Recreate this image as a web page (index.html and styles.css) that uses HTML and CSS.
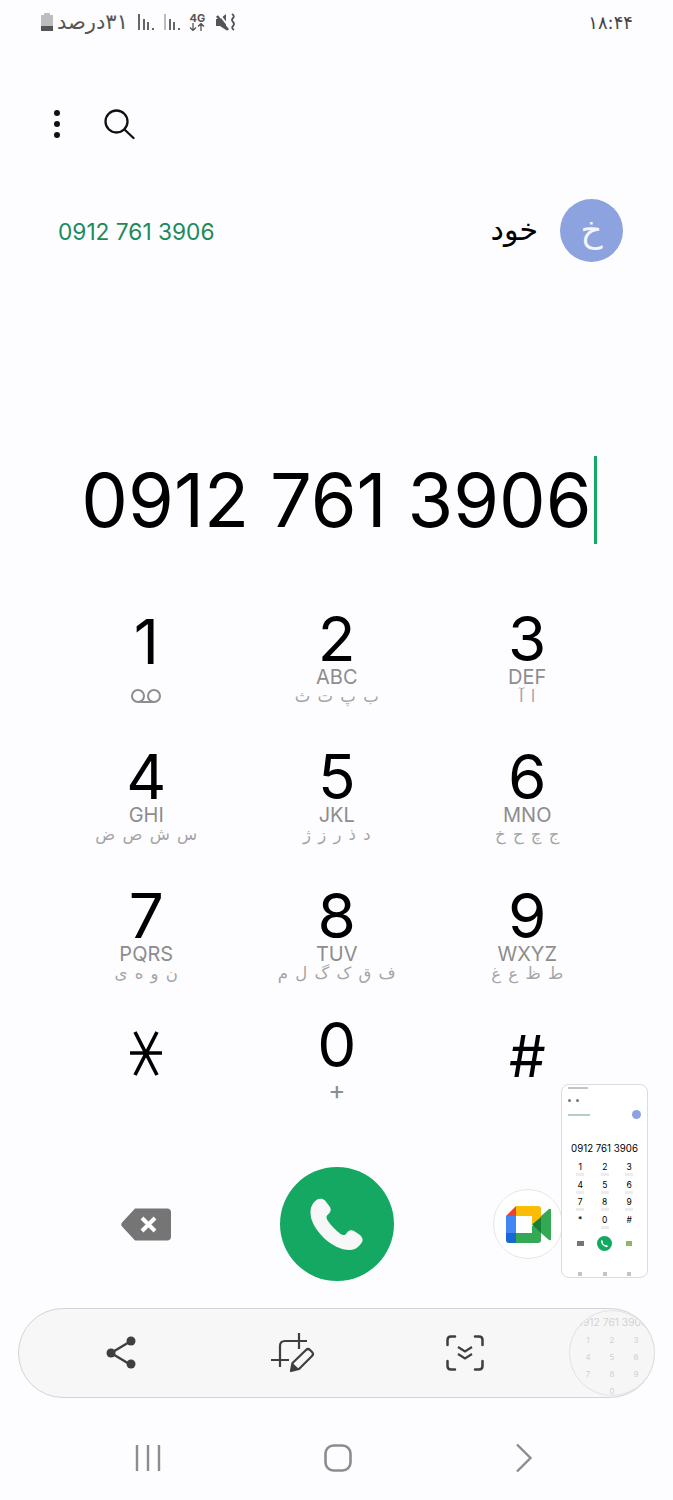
FILE: index.html
```html
<!DOCTYPE html>
<html lang="en">

<head>
    <meta charset="UTF-8">
    <meta name="viewport" content="width=device-width, initial-scale=1.0">
    <title>Dialer</title>
    <link rel="stylesheet" href="styles.css">
</head>

<body>
    <div class="screen">

        <div class="status-bar">
            <div class="status-left">
                <svg class="battery" viewBox="0 0 14 20" width="14" height="20">
                    <path d="M4 1h6v2h3v16H1V3h3z" fill="#bdbdbd"/>
                    <path d="M1 14h12v4.500q0 .5-.5.5h-11q-.5 0-.5-.5z" fill="#555"/>
                </svg>
                <span class="status-text" dir="rtl">۳۱درصد</span>
                <svg class="signal" viewBox="0 0 18 18" width="18" height="18">
                    <path d="M1 1h2v16H1zM6 6h2v11H6zM10 9h2v8h-2z" fill="#666"/>
                    <path d="M15 15h2v2h-2z" fill="#666"/>
                </svg>
                <svg class="signal" viewBox="0 0 18 18" width="18" height="18">
                    <path d="M1 1h2v16H1z" fill="#bbb"/>
                    <path d="M6 6h2v11H6zM10 9h2v8h-2zM15 15h2v2h-2z" fill="#666"/>
                </svg>
                <div class="net">
                    <span>4G</span>
                    <svg viewBox="0 0 16 8" width="16" height="8">
                        <path d="M4 0v7M1 4.500l3 3 3-3M12 8V1M9 3.500l3-3 3 3" fill="none" stroke="#555" stroke-width="1.300"/>
                    </svg>
                </div>
                <svg class="mute" viewBox="0 0 20 18" width="20" height="18">
                    <path d="M0 6h4l6-5v16l-6-4H0z" fill="#555"/>
                    <path d="M12 17L1 3" stroke="#555" stroke-width="2.600"/>
                    <path d="M14 15L3 1" stroke="#fdfdff" stroke-width="2"/>
                    <path d="M16 1q3 2 1 4t0 4 0 4 1 4" fill="none" stroke="#555" stroke-width="1.800"/>
                </svg>
            </div>
            <span class="clock" dir="rtl">۱۸:۴۴</span>
        </div>

        <div class="actions">
            <div class="more-dots"><i></i><i></i><i></i></div>
            <svg viewBox="0 0 32 32" width="32" height="32">
                <circle cx="13.500" cy="13.500" r="11" fill="none" stroke="#111" stroke-width="2.300"/>
                <path d="M21.500 21.500l9 8.500" stroke="#111" stroke-width="2.300" stroke-linecap="round"/>
            </svg>
        </div>

        <div class="match">
            <span class="match-number">0912 761 3906</span>
            <div class="match-name">
                <span class="name">خود</span>
                <div class="avatar">خ</div>
            </div>
        </div>

        <div class="dial-number">0912 761 3906<span class="caret"></span></div>

        <div class="keypad">
            <div class="key">
                <div class="digit one">1</div>
                <svg class="voicemail" viewBox="0 0 32 14" width="32" height="14">
                    <circle cx="8" cy="7" r="6" fill="none" stroke="#8d8d8d" stroke-width="2"/>
                    <circle cx="24" cy="7" r="6" fill="none" stroke="#8d8d8d" stroke-width="2"/>
                    <path d="M8 13h16" stroke="#8d8d8d" stroke-width="2"/>
                </svg>
            </div>
            <div class="key">
                <div class="digit">2</div>
                <div class="latin">ABC</div>
                <div class="persian" dir="rtl">ب پ ت ث</div>
            </div>
            <div class="key">
                <div class="digit">3</div>
                <div class="latin">DEF</div>
                <div class="persian" dir="rtl">ا آ</div>
            </div>
            <div class="key">
                <div class="digit">4</div>
                <div class="latin">GHI</div>
                <div class="persian" dir="rtl">س ش ص ض</div>
            </div>
            <div class="key">
                <div class="digit">5</div>
                <div class="latin">JKL</div>
                <div class="persian" dir="rtl">د ذ ر ز ژ</div>
            </div>
            <div class="key">
                <div class="digit">6</div>
                <div class="latin">MNO</div>
                <div class="persian" dir="rtl">ج چ ح خ</div>
            </div>
            <div class="key">
                <div class="digit">7</div>
                <div class="latin">PQRS</div>
                <div class="persian" dir="rtl">ن و ه ی</div>
            </div>
            <div class="key">
                <div class="digit">8</div>
                <div class="latin">TUV</div>
                <div class="persian" dir="rtl">ف ق ک گ ل م</div>
            </div>
            <div class="key">
                <div class="digit">9</div>
                <div class="latin">WXYZ</div>
                <div class="persian" dir="rtl">ط ظ ع غ</div>
            </div>
            <div class="key">
                <svg class="star" viewBox="0 0 34 46" width="34" height="46">
                    <path d="M1 22h32M6 1l22 43M28 1L6 44" stroke="#000" stroke-width="3.600" fill="none"/>
                </svg>
            </div>
            <div class="key">
                <div class="digit zero">0</div>
                <div class="plus">+</div>
            </div>
            <div class="key">
                <div class="digit hash">#</div>
            </div>
        </div>

        <div class="call-row">
            <div class="call-cell">
                <svg viewBox="0 0 50 33" width="50" height="33">
                    <path d="M14 .5h32q4 0 4 4v24q0 4-4 4H14L1.500 19q-2.500-2.500 0-5z" fill="#757575"/>
                    <path d="M21 10l13 13M34 10L21 23" stroke="#fff" stroke-width="4"/>
                </svg>
            </div>
            <div class="call-cell">
                <div class="call-btn">
                    <svg viewBox="0 0 53 53" width="53" height="53">
                        <path d="M9 1C6 1.500 1 6 .5 13 0 24 7 33 15 41c7 6 15 11 25 11 6 0 11-5 12.500-9 .5-2-.5-4-2.500-6l-6-4c-2-1.500-5-1-6.500 1l-2 2.500c-1.500 1-3.500.5-5.500-1-4-3-9-8-12-12.500-1.500-2-2-4-1-5.500l2.500-2.500c1.500-2 1.500-4 .5-6l-5-6.500C13 .5 11 .5 9 1z" fill="#f7f7f7"/>
                    </svg>
                </div>
            </div>
            <div class="call-cell">
                <div class="meet-btn">
                    <svg viewBox="0 0 45 37" width="45" height="37">
                        <path d="M10 0L0 10h10z" fill="#ea4335"/>
                        <path d="M10 0h22q3 0 3 3v15l-9 0V10H10z" fill="#fbbc04"/>
                        <path d="M0 10h10v17H0z" fill="#4285f4"/>
                        <path d="M0 27h10v10H3q-3 0-3-3z" fill="#1967d2"/>
                        <path d="M10 27h16v-7l9-1v15q0 3-3 3H10z" fill="#34a853"/>
                        <path d="M26 18.500L35 11v16z" fill="#188038"/>
                        <path d="M35 10l8-7q2-1 2 1v29q0 2-2 1l-8-7z" fill="#34a853"/>
                    </svg>
                </div>
            </div>
        </div>

        <div class="toolbar">
            <svg viewBox="0 0 30 34" width="30" height="34">
                <path d="M5 17L25 5M5 17l20 12" stroke="#3f3f3f" stroke-width="2.500"/>
                <circle cx="5" cy="17" r="4.500" fill="#3f3f3f"/>
                <circle cx="25" cy="5" r="4.500" fill="#3f3f3f"/>
                <circle cx="25" cy="28" r="4.500" fill="#3f3f3f"/>
            </svg>
            <svg viewBox="0 0 44 40" width="44" height="40">
                <path d="M9 34V13q0-5 5-5h22M0 27h18M28 0v16" fill="none" stroke="#3f3f3f" stroke-width="2.200"/>
                <path d="M20 38l1.500-8L35 17q2-2 4 0l2 2q2 2 0 4L28 36z" fill="#f7f7f7" stroke="#3f3f3f" stroke-width="2.200" stroke-linejoin="round"/>
                <path d="M21.500 30l6.500 6-8 2z" fill="#3f3f3f"/>
            </svg>
            <svg viewBox="0 0 38 36" width="38" height="36">
                <path d="M1.500 10V5q0-3.500 3.500-3.500h4M29 1.500h4q3.500 0 3.500 3.500v5M1.500 26v5q0 3.500 3.500 3.500h4M29 34.500h4q3.500 0 3.500-3.500v-5" fill="none" stroke="#3f3f3f" stroke-width="2.500" stroke-linecap="round"/>
                <path d="M12 12l7 4.500 7-4.500M12 19l7 4.500 7-4.500" fill="none" stroke="#3f3f3f" stroke-width="2.200"/>
            </svg>
            <span class="toolbar-gap"></span>
        </div>

        <div class="nav-bar">
            <svg viewBox="0 0 26 28" width="26" height="28">
                <path d="M2 1v26M13 1v26M24 1v26" stroke="#8c8c8c" stroke-width="2.400"/>
            </svg>
            <svg viewBox="0 0 28 28" width="28" height="28">
                <rect x="1.500" y="1.500" width="25" height="25" rx="8" fill="none" stroke="#8c8c8c" stroke-width="2.600"/>
            </svg>
            <svg viewBox="0 0 18 30" width="18" height="30">
                <path d="M2 1.500L15.500 15 2 28.500" fill="none" stroke="#8c8c8c" stroke-width="2.400"/>
            </svg>
        </div>

        <!-- screenshot preview sitting on top of the dialer -->
        <div class="thumb">
            <div class="thumb-status"></div>
            <div class="thumb-top"><i></i><i></i></div>
            <div class="thumb-match"><span></span><b></b></div>
            <div class="thumb-number">0912 761 3906</div>
            <div class="thumb-keys">
                <span>1</span><span>2</span><span>3</span>
                <span>4</span><span>5</span><span>6</span>
                <span>7</span><span>8</span><span>9</span>
                <span class="plain">*</span><span>0</span><span class="plain">#</span>
            </div>
            <div class="thumb-call">
                <i class="thumb-back"></i>
                <svg viewBox="0 0 15 15" width="15" height="15">
                    <circle cx="7.500" cy="7.500" r="7.500" fill="#14a862"/>
                    <path d="M5 4l1.200 2-.6 1q1 1.500 2.400 2.400l1-.6 2 1.200q-.5 1.500-2 1-4-1.500-5-5-.3-1.500 1-2z" fill="#fff"/>
                </svg>
                <i class="thumb-meet"></i>
            </div>
            <div class="thumb-nav"><i></i><i></i><i></i></div>
        </div>

        <div class="lens">
            <div class="lens-number">0912 761 3906</div>
            <div class="lens-keys">
                <span>1</span><span>2</span><span>3</span>
                <span>4</span><span>5</span><span>6</span>
                <span>7</span><span>8</span><span>9</span>
                <span></span><span>0</span><span></span>
            </div>
        </div>

    </div>
</body>

</html>
```

FILE: styles.css
```css
* {
    box-sizing: border-box;
}

html, body {
    margin: 0;
    padding: 0;
    background-color: #fdfdff;
}

.screen {
    position: relative;
    width: 673px;
    height: 1500px;
    overflow: hidden;
    font-family: Inter, "DejaVu Sans", sans-serif;
    color: #000;
}

/* status bar */
.status-bar {
    display: flex;
    justify-content: space-between;
    align-items: center;
    height: 44px;
    padding: 0 40px;
}

.status-left {
    display: flex;
    align-items: center;
}

.battery {
    margin-right: 3px;
}

.status-text {
    font-family: "DejaVu Sans", sans-serif;
    font-size: 21px;
    line-height: 24px;
    color: #555;
    margin-right: 9px;
}

.signal {
    margin-right: 8px;
}

.net {
    display: flex;
    flex-direction: column;
    align-items: center;
    width: 17px;
    margin-right: 10px;
    font-size: 11px;
    line-height: 10px;
    font-weight: 700;
    color: #555;
}

.net svg {
    display: block;
}

.clock {
    font-family: "DejaVu Sans", sans-serif;
    font-size: 18px;
    color: #444;
}

/* menu + search */
.actions {
    display: flex;
    align-items: center;
    gap: 43px;
    height: 40px;
    margin-top: 60px;
    padding-left: 54px;
}

.more-dots {
    display: flex;
    flex-direction: column;
    gap: 5px;
}

.more-dots i {
    display: block;
    width: 6px;
    height: 6px;
    border-radius: 50%;
    background-color: #111;
}

/* contact match */
.match {
    display: flex;
    justify-content: space-between;
    align-items: center;
    height: 64px;
    margin-top: 54px;
    padding: 0 50px 0 58px;
}

.match-number {
    margin-top: 3px;
    font-size: 22.700px;
    color: #1c8a5a;
}

.match-name {
    display: flex;
    align-items: center;
    gap: 22px;
}

.name {
    font-family: "DejaVu Sans", sans-serif;
    font-size: 30px;
    line-height: 40px;
}

.avatar {
    display: flex;
    justify-content: center;
    align-items: center;
    width: 63px;
    height: 63px;
    border-radius: 50%;
    background-color: #8ca3e0;
    font-family: "DejaVu Sans", sans-serif;
    font-size: 34px;
    line-height: 40px;
    color: #f4f6fc;
}

/* typed number */
.dial-number {
    display: flex;
    justify-content: center;
    align-items: center;
    height: 90px;
    margin-top: 193px;
    font-size: 74px;
    padding-left: 5px;
}

.caret {
    width: 3px;
    height: 88px;
    margin-left: 2px;
    background-color: #14a862;
}

/* keypad */
.keypad {
    display: grid;
    grid-template-columns: repeat(3, 190.500px);
    grid-auto-rows: 138.300px;
    margin-top: 65px;
    padding-left: 51px;
}

.key {
    display: flex;
    flex-direction: column;
    align-items: center;
}

.digit {
    height: 58px;
    font-size: 62px;
    line-height: 58px;
}

.latin {
    height: 20px;
    margin-top: -1px;
    font-size: 20px;
    line-height: 20px;
    color: #8d8d8d;
}

.persian {
    height: 20px;
    font-family: "DejaVu Sans", sans-serif;
    font-size: 16.500px;
    line-height: 20px;
    word-spacing: 2px;
    color: #a5a5a5;
}

.one {
    margin-top: 3px;
}

.voicemail {
    margin-top: 18px;
}

.star {
    margin-top: 6px;
}

.zero {
    margin-top: -9px;
}

.hash {
    margin-top: 2px;
    font-size: 58px;
}

.plus {
    font-size: 26px;
    line-height: 26px;
    margin-top: 3px;
    color: #8d8d8d;
}

/* call row */
.call-row {
    display: grid;
    grid-template-columns: repeat(3, 190.500px);
    align-items: center;
    height: 114px;
    margin-top: 4px;
    padding-left: 51px;
}

.call-cell {
    display: flex;
    justify-content: center;
    align-items: center;
}

.call-btn {
    display: flex;
    justify-content: center;
    align-items: center;
    width: 114px;
    height: 114px;
    border-radius: 50%;
    background-color: #14a862;
}

.meet-btn {
    display: flex;
    justify-content: center;
    align-items: center;
    width: 70px;
    height: 70px;
    margin-left: 2px;
    border: 1px solid #e6e6e6;
    border-radius: 50%;
    background-color: #fff;
}

/* screenshot toolbar */
.toolbar {
    display: flex;
    align-items: center;
    width: 637px;
    height: 90px;
    margin: 27px 0 0 18px;
    padding-left: 87px;
    border: 1px solid #d4d4d4;
    border-radius: 45px;
    background-color: #f7f7f7;
}

.toolbar svg:nth-child(1) {
    margin-right: 135px;
}

.toolbar svg:nth-child(2) {
    margin-right: 131px;
}

/* navigation */
.nav-bar {
    display: flex;
    justify-content: space-between;
    align-items: center;
    height: 40px;
    margin-top: 40px;
    padding: 0 140px 0 135px;
}

/* preview thumbnail */
.thumb {
    position: absolute;
    left: 561px;
    top: 1084px;
    width: 87px;
    height: 194px;
    padding: 0 6px;
    border: 1px solid #dcdcdc;
    border-radius: 8px;
    background-color: #fff;
}

.thumb-status {
    width: 20px;
    height: 2px;
    margin-top: 2px;
    background-color: #c4c4c4;
}

.thumb-top {
    display: flex;
    gap: 5px;
    margin-top: 10px;
}

.thumb-top i {
    width: 3px;
    height: 3px;
    border-radius: 50%;
    background-color: #777;
}

.thumb-match {
    display: flex;
    justify-content: space-between;
    align-items: center;
    margin-top: 8px;
}

.thumb-match span {
    width: 22px;
    height: 2px;
    background-color: #b4cfc1;
}

.thumb-match b {
    width: 9px;
    height: 9px;
    border-radius: 50%;
    background-color: #8ca3e0;
}

.thumb-number {
    margin-top: 23px;
    font-size: 9.700px;
    line-height: 14px;
    text-align: center;
    white-space: nowrap;
}

.thumb-keys {
    display: grid;
    grid-template-columns: repeat(3, 24.500px);
    grid-auto-rows: 17.500px;
    margin-top: 6px;
    font-size: 8.500px;
    line-height: 11px;
    text-align: center;
}

.thumb-keys span::after {
    content: "";
    display: block;
    width: 8px;
    height: 3px;
    margin: 0 auto;
    background-color: #ececec;
}

.thumb-keys .plain::after {
    display: none;
}

.thumb-call {
    display: grid;
    grid-template-columns: repeat(3, 24.500px);
    justify-items: center;
    align-items: center;
    margin-top: 4px;
}

.thumb-back {
    width: 7px;
    height: 5px;
    background-color: #757575;
}

.thumb-meet {
    width: 6px;
    height: 5px;
    background-color: #8bb96b;
}

.thumb-nav {
    display: grid;
    grid-template-columns: repeat(3, 24.500px);
    justify-items: center;
    margin-top: 21px;
}

.thumb-nav i {
    width: 4px;
    height: 4px;
    background-color: #c4c4c4;
}

/* magnifier over the toolbar end */
.lens {
    position: absolute;
    left: 569px;
    top: 1310px;
    width: 86px;
    height: 86px;
    overflow: hidden;
    border: 1px solid #e2e2e2;
    border-radius: 50%;
    background-color: #f6f6f6;
    color: #d2d2d2;
}

.lens-number {
    margin-top: 4px;
    font-size: 10.300px;
    line-height: 14px;
    text-align: center;
    white-space: nowrap;
}

.lens-keys {
    display: grid;
    grid-template-columns: repeat(3, 24px);
    grid-auto-rows: 17px;
    justify-content: center;
    margin-top: 4px;
    font-size: 8px;
    line-height: 14px;
    text-align: center;
}
```
